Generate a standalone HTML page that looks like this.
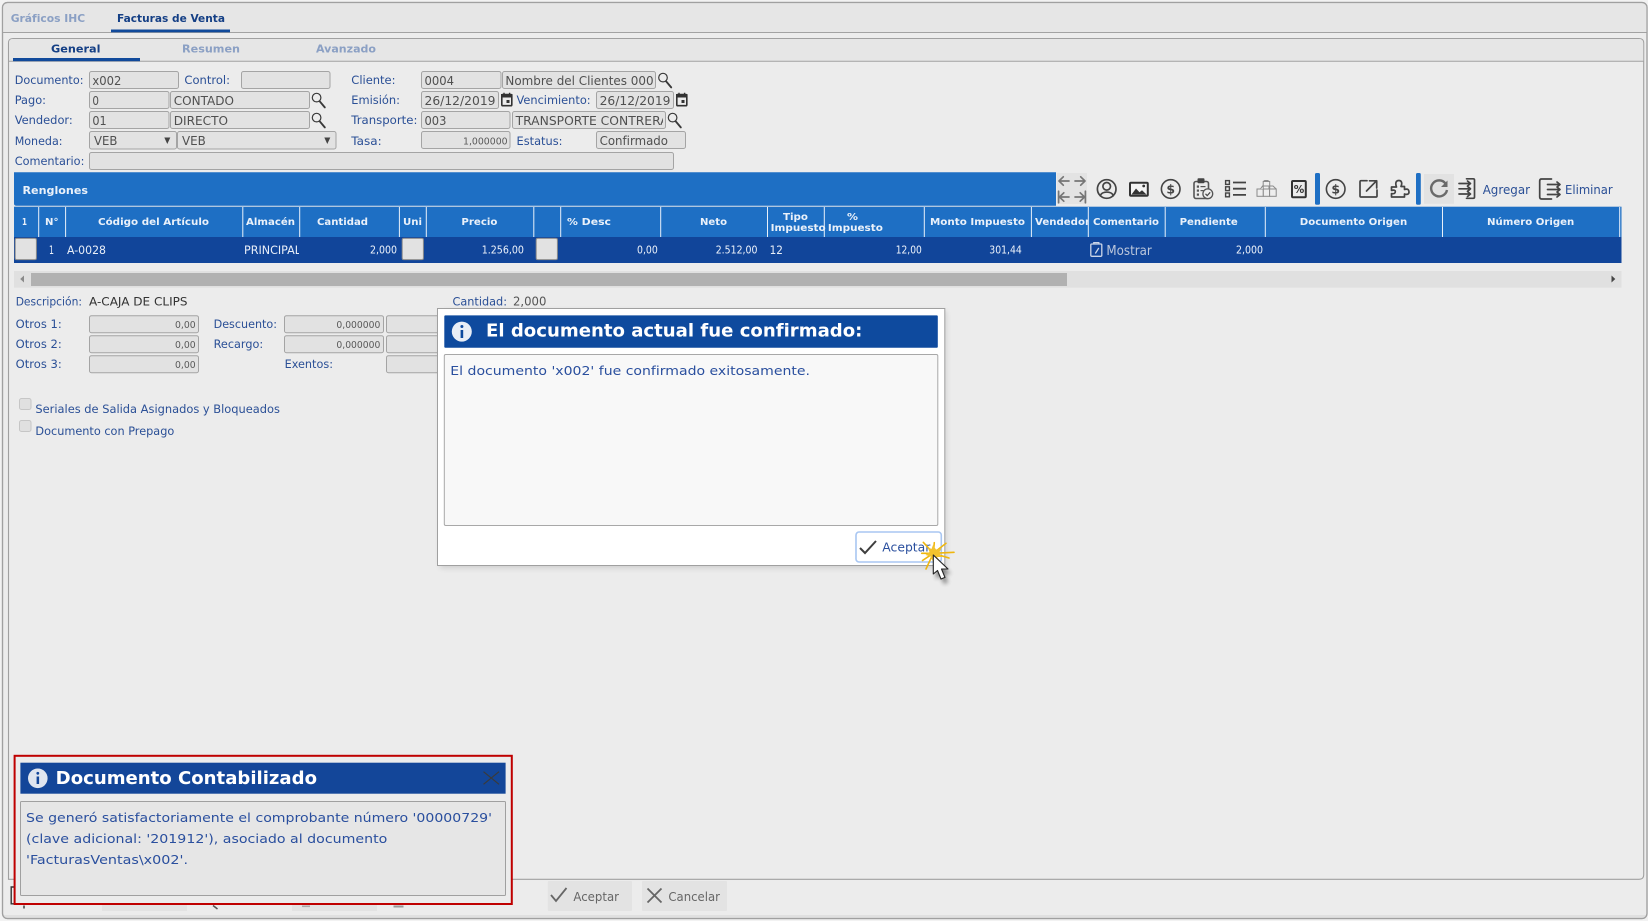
<!DOCTYPE html>
<html lang="es"><head><meta charset="utf-8"><title>Facturas de Venta</title>
<style>
html,body{margin:0;padding:0;width:1648px;height:921px;overflow:hidden;background:#f0f0f0}
svg{display:block;filter:blur(.35px)}
text{font-family:"DejaVu Sans","Liberation Sans",sans-serif;white-space:pre}
.l{font-size:11.5px;fill:#2a4f96}
.v{font-size:12.5px;fill:#505050}
.n{font-size:10px;fill:#5a5a5a}
.h{font-size:10px;font-weight:bold;fill:#eaf1fa}
.r{font-size:11.5px;fill:#e8eef8}
.m{font-size:10.6px;fill:#eef3fb}
.t{font-size:11px;font-weight:bold}
.i{fill:#e2e2e2;stroke:#a4a4a4;stroke-width:1}
.ic{fill:none;stroke:#444;stroke-width:1.7;stroke-linecap:round;stroke-linejoin:round}
.sep{stroke:#e8f0fa;stroke-width:1}
</style></head><body>
<svg width="1648" height="921" viewBox="0 0 1648 921" xmlns="http://www.w3.org/2000/svg">
<defs>
<clipPath id="c1"><rect x="244" y="240" width="55" height="20"/></clipPath>
<clipPath id="c2"><rect x="515" y="111" width="148" height="18"/></clipPath>
<clipPath id="c3"><rect x="1030" y="207" width="58" height="30"/></clipPath>
<filter id="sh" x="-20%" y="-20%" width="140%" height="140%"><feGaussianBlur stdDeviation="3"/></filter>
<filter id="sh2" x="-50%" y="-50%" width="200%" height="200%"><feGaussianBlur stdDeviation="2"/></filter>
</defs>
<rect width="1648" height="921" fill="#f2f2f2"/>
<!-- outer -->
<rect x="2.5" y="2.5" width="1644.5" height="916" rx="5" fill="#ececec" stroke="#a0a0a0" stroke-width="1.2"/>
<path d="M3 32.3V8Q3 3 8 3H1642Q1646.5 3 1646.5 8V32.3Z" fill="#e6e6e6"/>
<path d="M3 32.5H1647" stroke="#a2a2a2" stroke-width="1.1"/>
<rect x="3.2" y="915" width="1643" height="3.2" fill="#e0e0e0"/>
<rect x="2.5" y="2.5" width="1644.5" height="916" rx="5" fill="none" stroke="#a0a0a0" stroke-width="1.2"/>
<text x="10.7" y="22" class="t" fill="#8ba0c4" textLength="74.5" lengthAdjust="spacingAndGlyphs">Gráficos IHC</text>
<text x="117" y="22" class="t" fill="#143f85" textLength="108" lengthAdjust="spacingAndGlyphs">Facturas de Venta</text>
<rect x="111" y="29.5" width="119" height="2.8" fill="#114a9b"/>
<!-- inner -->
<path d="M8.5 879.3V43Q8.5 38.5 13 38.5H1639Q1643.7 38.5 1643.7 43V875Q1643.7 879.3 1639 879.3Z" fill="#ececec" stroke="#a0a0a0" stroke-width="1.1"/>
<path d="M9 42.5Q9 39 13 39H1639Q1643.2 39 1643.2 43V61H9Z" fill="#e6e6e6"/>
<path d="M8.5 61.2H1643.7" stroke="#a2a2a2" stroke-width="1"/>
<text x="51" y="52.6" class="t" fill="#143f85" textLength="49.5" lengthAdjust="spacingAndGlyphs">General</text>
<text x="182" y="52.6" class="t" fill="#8ba0c4" textLength="58" lengthAdjust="spacingAndGlyphs">Resumen</text>
<text x="316" y="52.6" class="t" fill="#8ba0c4" textLength="60" lengthAdjust="spacingAndGlyphs">Avanzado</text>
<rect x="13" y="58" width="127" height="3.2" fill="#114a9b"/>
<!-- form inputs -->
<g>
<rect class="i" x="89.5" y="71.5" width="89" height="17" rx="2"/>
<rect class="i" x="241.5" y="71.5" width="88.5" height="17" rx="2"/>
<rect class="i" x="421.5" y="71.5" width="79.5" height="17" rx="2"/>
<rect class="i" x="502.5" y="71.5" width="153" height="17" rx="2"/>
<rect class="i" x="89.5" y="91.5" width="79.5" height="17" rx="2"/>
<rect class="i" x="170.5" y="91.5" width="139" height="17" rx="2"/>
<rect class="i" x="421.5" y="91.5" width="77" height="17" rx="2"/>
<rect class="i" x="596.5" y="91.5" width="77" height="17" rx="2"/>
<rect class="i" x="89.5" y="111.5" width="79.5" height="17" rx="2"/>
<rect class="i" x="170.5" y="111.5" width="139" height="17" rx="2"/>
<rect class="i" x="421.5" y="111.5" width="88.5" height="17" rx="2"/>
<rect class="i" x="512.5" y="111.5" width="153" height="17" rx="2"/>
<rect class="i" x="89.5" y="131.5" width="87" height="17.5" rx="2"/>
<rect class="i" x="177.5" y="131.5" width="158.5" height="17.5" rx="2"/>
<rect class="i" x="421.5" y="131.5" width="88.5" height="17" rx="2"/>
<rect class="i" x="596.5" y="131.5" width="89" height="17" rx="2"/>
<rect class="i" x="89.5" y="152.5" width="584" height="17" rx="2"/>
</g>
<!-- labels -->
<text class="l" x="14.7" y="84.2" textLength="68.8" lengthAdjust="spacingAndGlyphs">Documento:</text>
<text class="l" x="184.4" y="84.2" textLength="45.6" lengthAdjust="spacingAndGlyphs">Control:</text>
<text class="l" x="351.3" y="84.2" textLength="44.2" lengthAdjust="spacingAndGlyphs">Cliente:</text>
<text class="l" x="14.7" y="104.2" textLength="31.3" lengthAdjust="spacingAndGlyphs">Pago:</text>
<text class="l" x="351.3" y="104.2" textLength="48.7" lengthAdjust="spacingAndGlyphs">Emisión:</text>
<text class="l" x="516.5" y="104.2" textLength="74.1" lengthAdjust="spacingAndGlyphs">Vencimiento:</text>
<text class="l" x="14.7" y="124.2" textLength="58.1" lengthAdjust="spacingAndGlyphs">Vendedor:</text>
<text class="l" x="351.3" y="124.2" textLength="66.1" lengthAdjust="spacingAndGlyphs">Transporte:</text>
<text class="l" x="14.7" y="145" textLength="47.8" lengthAdjust="spacingAndGlyphs">Moneda:</text>
<text class="l" x="351.3" y="145" textLength="30.4" lengthAdjust="spacingAndGlyphs">Tasa:</text>
<text class="l" x="516.5" y="145" textLength="46" lengthAdjust="spacingAndGlyphs">Estatus:</text>
<text class="l" x="14.7" y="165" textLength="69.7" lengthAdjust="spacingAndGlyphs">Comentario:</text>
<!-- values -->
<text class="v" x="92.4" y="85" textLength="29" lengthAdjust="spacingAndGlyphs">x002</text>
<text class="v" x="424.5" y="85" textLength="29.5" lengthAdjust="spacingAndGlyphs">0004</text>
<text class="v" x="505.4" y="85" textLength="148.2" lengthAdjust="spacingAndGlyphs">Nombre del Clientes 000</text>
<text class="v" x="92.4" y="105" textLength="6.6" lengthAdjust="spacingAndGlyphs">0</text>
<text class="v" x="173.7" y="105" textLength="60.3" lengthAdjust="spacingAndGlyphs">CONTADO</text>
<text class="v" x="424.5" y="105" textLength="71" lengthAdjust="spacingAndGlyphs">26/12/2019</text>
<text class="v" x="599.6" y="105" textLength="70.9" lengthAdjust="spacingAndGlyphs">26/12/2019</text>
<text class="v" x="92.4" y="125" textLength="14.3" lengthAdjust="spacingAndGlyphs">01</text>
<text class="v" x="173.7" y="125" textLength="54.3" lengthAdjust="spacingAndGlyphs">DIRECTO</text>
<text class="v" x="424.5" y="125" textLength="21.9" lengthAdjust="spacingAndGlyphs">003</text>
<text class="v" clip-path="url(#c2)" x="515.6" y="125" textLength="153" lengthAdjust="spacingAndGlyphs">TRANSPORTE CONTRERA</text>
<text class="v" x="94" y="145" textLength="23.4" lengthAdjust="spacingAndGlyphs">VEB</text>
<text class="v" x="182" y="145" textLength="23.8" lengthAdjust="spacingAndGlyphs">VEB</text>
<path d="M164.3 137.5h6l-3 6.5zM324.3 137.5h6l-3 6.5z" fill="#444"/>
<text class="n" x="463" y="144.5" textLength="44.6" lengthAdjust="spacingAndGlyphs">1,000000</text>
<text class="v" x="599.6" y="145" textLength="68.4" lengthAdjust="spacingAndGlyphs">Confirmado</text>
<!-- search icons -->
<g fill="none" stroke="#3a3a3a" stroke-width="1.2" stroke-linecap="round">
<g><circle cx="663" cy="77.6" r="4.3"/><path d="M666 81.2l5.2 6.2" stroke-width="1.9"/></g>
<g><circle cx="316.6" cy="97.6" r="4.3"/><path d="M319.6 101.2l5.2 6.2" stroke-width="1.9"/></g>
<g><circle cx="316.6" cy="117.6" r="4.3"/><path d="M319.6 121.2l5.2 6.2" stroke-width="1.9"/></g>
<g><circle cx="672.6" cy="117.6" r="4.3"/><path d="M675.6 121.2l5.2 6.2" stroke-width="1.9"/></g>
</g>
<!-- calendars -->
<g>
<rect x="501.8" y="94.5" width="10" height="11.2" rx="1" fill="none" stroke="#333" stroke-width="1.6"/><rect x="501" y="94" width="11.5" height="3.5" fill="#333"/><path d="M504 92.8v2M509.6 92.8v2" stroke="#333" stroke-width="1.4"/><rect x="506.5" y="100" width="3" height="3" fill="#333"/>
<rect x="676.8" y="94.5" width="10" height="11.2" rx="1" fill="none" stroke="#333" stroke-width="1.6"/><rect x="676" y="94" width="11.5" height="3.5" fill="#333"/><path d="M679 92.8v2M684.6 92.8v2" stroke="#333" stroke-width="1.4"/><rect x="681.5" y="100" width="3" height="3" fill="#333"/>
</g>
<!-- Renglones bar -->
<path d="M14 172.3H1056V205.7H16Q14 205.7 14 203.5Z" fill="#1e6fc4"/>
<text x="22.5" y="194.2" class="t" fill="#eaf1fa" textLength="65.5" lengthAdjust="spacingAndGlyphs">Renglones</text>
<!-- header -->
<rect x="14" y="206.7" width="1607.5" height="30.5" fill="#1e6fc4"/>
<path class="sep" d="M38.7 207V237M65.6 207V237M242.8 207V237M299.7 207V237M399.4 207V237M426.3 207V237M533.8 207V237M560.7 207V237M660.7 207V237M767.5 207V237M824.3 207V237M924.3 207V237M1031.4 207V237M1088.3 207V237M1165.2 207V237M1265.3 207V237M1442.5 207V237M1619.7 207V237"/>
<g>
<text class="h" x="22" y="225" textLength="5" lengthAdjust="spacingAndGlyphs">1</text>
<text class="h" x="45" y="225" textLength="13.5" lengthAdjust="spacingAndGlyphs">N°</text>
<text class="h" x="98" y="225" textLength="111" lengthAdjust="spacingAndGlyphs">Código del Artículo</text>
<text class="h" x="246" y="225" textLength="49" lengthAdjust="spacingAndGlyphs">Almacén</text>
<text class="h" x="317" y="225" textLength="51" lengthAdjust="spacingAndGlyphs">Cantidad</text>
<text class="h" x="403" y="225" textLength="19" lengthAdjust="spacingAndGlyphs">Uni</text>
<text class="h" x="461.4" y="225" textLength="36" lengthAdjust="spacingAndGlyphs">Precio</text>
<text class="h" x="567" y="225" textLength="44" lengthAdjust="spacingAndGlyphs">% Desc</text>
<text class="h" x="700" y="225" textLength="27" lengthAdjust="spacingAndGlyphs">Neto</text>
<text class="h" x="783" y="220" textLength="25" lengthAdjust="spacingAndGlyphs">Tipo</text>
<text class="h" x="770.7" y="231" textLength="55" lengthAdjust="spacingAndGlyphs">Impuesto</text>
<text class="h" x="847" y="220" textLength="11" lengthAdjust="spacingAndGlyphs">%</text>
<text class="h" x="827.9" y="231" textLength="55" lengthAdjust="spacingAndGlyphs">Impuesto</text>
<text class="h" x="930" y="225" textLength="95" lengthAdjust="spacingAndGlyphs">Monto Impuesto</text>
<text class="h" clip-path="url(#c3)" x="1035" y="225" textLength="55" lengthAdjust="spacingAndGlyphs">Vendedor</text>
<text class="h" x="1093" y="225" textLength="66" lengthAdjust="spacingAndGlyphs">Comentario</text>
<text class="h" x="1179.6" y="225" textLength="58.2" lengthAdjust="spacingAndGlyphs">Pendiente</text>
<text class="h" x="1299.8" y="225" textLength="107.4" lengthAdjust="spacingAndGlyphs">Documento Origen</text>
<text class="h" x="1487" y="225" textLength="87.3" lengthAdjust="spacingAndGlyphs">Número Origen</text>
</g>
<!-- row -->
<rect x="14" y="237" width="1607.5" height="26" fill="#11459a"/>
<rect x="15.2" y="238.4" width="21.2" height="21.2" rx="1.5" fill="#e2e2e2" stroke="#8d8d8d"/>
<rect x="402.2" y="238.4" width="21.2" height="21.2" rx="1.5" fill="#e2e2e2" stroke="#8d8d8d"/>
<rect x="536.2" y="238.4" width="21.2" height="21.2" rx="1.5" fill="#e2e2e2" stroke="#8d8d8d"/>
<text class="r" x="49" y="254" textLength="5" lengthAdjust="spacingAndGlyphs">1</text>
<text class="r" x="67" y="254" textLength="39" lengthAdjust="spacingAndGlyphs">A-0028</text>
<text class="r" clip-path="url(#c1)" x="244" y="254" textLength="57" lengthAdjust="spacingAndGlyphs">PRINCIPAL</text>
<text class="m" x="370" y="253.6" textLength="27" lengthAdjust="spacingAndGlyphs">2,000</text>
<text class="m" x="481.7" y="253.6" textLength="42.3" lengthAdjust="spacingAndGlyphs">1.256,00</text>
<text class="m" x="637" y="253.6" textLength="20.8" lengthAdjust="spacingAndGlyphs">0,00</text>
<text class="m" x="715.7" y="253.6" textLength="41.8" lengthAdjust="spacingAndGlyphs">2.512,00</text>
<text class="r" x="769.6" y="254" textLength="13.3" lengthAdjust="spacingAndGlyphs">12</text>
<text class="m" x="895.7" y="253.6" textLength="26.1" lengthAdjust="spacingAndGlyphs">12,00</text>
<text class="m" x="989.3" y="253.6" textLength="32.5" lengthAdjust="spacingAndGlyphs">301,44</text>
<text class="m" x="1236" y="253.6" textLength="27" lengthAdjust="spacingAndGlyphs">2,000</text>
<g fill="none" stroke="#ccd6e8" stroke-width="1.3"><rect x="1090.8" y="244" width="11" height="12.3" rx="1"/><path d="M1093.8 244v-1.4h5v1.4M1098.8 248l-3.5 5.5" /></g>
<text x="1106.4" y="255" font-size="13.6" fill="#bcc7dc" textLength="45.4" lengthAdjust="spacingAndGlyphs">Mostrar</text>
<!-- scrollbar -->
<rect x="14" y="271" width="1607.5" height="16.7" fill="#e0e0e0"/>
<rect x="31" y="273" width="1036" height="13" fill="#b1b1b1"/>
<path d="M24 275.5v7l-3.8-3.5z" fill="#8a8a8a"/><path d="M1611.5 275.5v7l3.8-3.5z" fill="#444"/>
<!-- toolbar -->
<rect x="1057" y="173" width="30" height="31" fill="#e3e3e3"/>
<g fill="none" stroke="#767676" stroke-width="1.7" stroke-linecap="round" stroke-linejoin="round">
<path d="M1059 181H1069M1063.3 176.8l-4.3 4.2 4.3 4.2"/><path d="M1075 181H1085M1080.7 176.8l4.3 4.2-4.3 4.2"/>
<path d="M1058.6 191.2v11.6M1059.5 197H1069M1063.8 192.8l-4.3 4.2 4.3 4.2"/><path d="M1085.4 191.2v11.6M1075 197H1084.5M1080.2 192.8l4.3 4.2-4.3 4.2"/>
</g>
<!-- user -->
<g class="ic" stroke="#3c3c3c"><circle cx="1106.7" cy="189" r="9.3"/><circle cx="1106.7" cy="186.3" r="3.8"/><path d="M1100.3 195.8c1.5-5 11.5-5 13 0"/></g>
<!-- image -->
<rect x="1130" y="182.7" width="17.8" height="13" rx="1" fill="#f4f4f4" stroke="#333" stroke-width="2"/>
<path d="M1131.5 194.5L1136 188.5 1139.5 192.3 1142 190.2 1146.5 194.5Z" fill="#333"/><circle cx="1143.7" cy="186" r="1.4" fill="#333"/>
<!-- dollar -->
<circle cx="1170.7" cy="189" r="9.3" fill="none" stroke="#444" stroke-width="1.6"/>
<text x="1170.7" y="193.5" font-size="12.5" font-weight="bold" fill="#444" text-anchor="middle">$</text>
<!-- clipboard-check -->
<g fill="none" stroke="#555" stroke-width="1.6" stroke-linejoin="round"><rect x="1194" y="181.5" width="14.5" height="17" rx="2"/></g>
<rect x="1197.5" y="178.3" width="7" height="5" rx="1" fill="#444"/>
<g fill="#555"><rect x="1196.8" y="185.5" width="2.2" height="2.2"/><rect x="1196.8" y="189.5" width="2.2" height="2.2"/><rect x="1196.8" y="193.5" width="2.2" height="2.2"/><rect x="1200.5" y="186" width="5" height="1.2"/><rect x="1200.5" y="190" width="3" height="1.2"/></g>
<circle cx="1207.8" cy="193.8" r="4.9" fill="#ececec" stroke="#555" stroke-width="1.3"/><path d="M1205.5 193.8l1.7 1.8 3-3.3" fill="none" stroke="#444" stroke-width="1.2"/>
<!-- list -->
<g fill="none" stroke="#444" stroke-width="1.4"><rect x="1225.6" y="180.6" width="3.8" height="3.8"/><rect x="1225.6" y="186.8" width="3.8" height="3.8"/><rect x="1225.6" y="193" width="3.8" height="3.8"/></g>
<path d="M1233 182.5H1246M1233 188.7H1246M1233 194.9H1246" stroke="#444" stroke-width="1.8"/>
<!-- boxes -->
<g fill="#eee" stroke="#8a8a8a" stroke-width="1"><rect x="1257" y="189" width="6.3" height="7.3"/><rect x="1263.3" y="189" width="6.3" height="7.3"/><rect x="1269.6" y="189" width="6.6" height="7.3"/><path d="M1260.5 189l2-3h6.5v3M1263.2 181.5h6.5v7.5h-6.5zM1263.2 181.5l1.5-1h3l1.8 1M1269.7 186h3.3l3.2 3"/></g>
<!-- percent doc -->
<rect x="1292" y="181" width="13.8" height="16.3" rx="1" fill="#ececec" stroke="#333" stroke-width="2"/>
<text x="1299" y="193" font-size="10.5" font-weight="bold" fill="#333" text-anchor="middle">%</text>
<rect x="1315" y="173" width="5" height="31.7" rx="1.5" fill="#1e6fc4"/>
<circle cx="1335.7" cy="189" r="9.3" fill="none" stroke="#444" stroke-width="1.6"/>
<text x="1335.7" y="193.5" font-size="12.5" font-weight="bold" fill="#444" text-anchor="middle">$</text>
<!-- external -->
<path class="ic" stroke="#555" d="M1367 180.7H1361Q1360 180.7 1360 182V196Q1360 197 1361 197H1376Q1377 197 1377 196V190M1366.5 191L1376.5 180.8M1369.5 180.8H1376.7V188"/>
<!-- puzzle -->
<path class="ic" stroke="#444" stroke-width="1.5" d="M1391.5 187H1396.5C1395 183 1396 180.5 1398.8 180.5S1402.5 183 1401 186.5H1404.5V189.5C1408 188.3 1409 190 1409 192S1407.5 195 1404.5 194V197H1391.5V193.6C1394.5 194 1395.3 193 1395.3 191.6S1394.3 189.8 1391.5 190.4Z"/>
<rect x="1416" y="173" width="4.8" height="31.7" rx="1.5" fill="#1e6fc4"/>
<!-- refresh -->
<rect x="1424" y="174" width="30" height="29.7" fill="#e2e2e2"/>
<path d="M1445.5 183.5A8 8 0 1 0 1447 190" fill="none" stroke="#6a6a6a" stroke-width="2.4"/>
<path d="M1447.5 180.5v6.5h-6.5z" fill="#6a6a6a"/>
<!-- agregar -->
<path class="ic" stroke="#3c3c3c" d="M1466.5 178.8H1473.2Q1474.5 178.8 1474.5 180V197Q1474.5 198.3 1473.2 198.3H1466.5"/>
<path class="ic" stroke="#3c3c3c" stroke-width="1.5" d="M1459 183.5H1470.5M1467.5 181l3 2.5-3 2.5M1459 188.8H1470.5M1467.5 186.3l3 2.5-3 2.5M1459 194H1470.5M1467.5 191.5l3 2.5-3 2.5"/>
<text x="1482.7" y="194" font-size="12" fill="#2a4f96" textLength="47.3" lengthAdjust="spacingAndGlyphs">Agregar</text>
<!-- eliminar -->
<path class="ic" stroke="#3c3c3c" d="M1551.5 179H1541.5Q1539.7 179 1539.7 181V197Q1539.7 199 1541.5 199H1551.5"/>
<path class="ic" stroke="#3c3c3c" stroke-width="1.5" d="M1547.5 184.5H1560M1557 182l3 2.5-3 2.5M1547.5 189.5H1560M1557 187l3 2.5-3 2.5M1547.5 194.5H1560M1557 192l3 2.5-3 2.5"/>
<text x="1565" y="194" font-size="12" fill="#2a4f96" textLength="47.7" lengthAdjust="spacingAndGlyphs">Eliminar</text>
<!-- details -->
<text class="l" x="15.7" y="305.4" textLength="66.3" lengthAdjust="spacingAndGlyphs">Descripción:</text>
<text x="89" y="305.4" font-size="11.5" fill="#333" textLength="98.5" lengthAdjust="spacingAndGlyphs">A-CAJA DE CLIPS</text>
<text class="l" x="452.5" y="305.7" textLength="54.5" lengthAdjust="spacingAndGlyphs">Cantidad:</text>
<text x="513" y="305.7" font-size="12" fill="#555" textLength="33.4" lengthAdjust="spacingAndGlyphs">2,000</text>
<text class="l" x="15.7" y="328" textLength="46.1" lengthAdjust="spacingAndGlyphs">Otros 1:</text>
<text class="l" x="15.7" y="348" textLength="46.1" lengthAdjust="spacingAndGlyphs">Otros 2:</text>
<text class="l" x="15.7" y="368" textLength="46.1" lengthAdjust="spacingAndGlyphs">Otros 3:</text>
<text class="l" x="213.6" y="328" textLength="63.4" lengthAdjust="spacingAndGlyphs">Descuento:</text>
<text class="l" x="213.6" y="348" textLength="49.6" lengthAdjust="spacingAndGlyphs">Recargo:</text>
<text class="l" x="284.6" y="368" textLength="48.4" lengthAdjust="spacingAndGlyphs">Exentos:</text>
<rect class="i" x="89.5" y="315.7" width="109" height="17" rx="2"/>
<rect class="i" x="89.5" y="335.7" width="109" height="17" rx="2"/>
<rect class="i" x="89.5" y="355.7" width="109" height="17" rx="2"/>
<rect class="i" x="284.5" y="315.7" width="99" height="17" rx="2"/>
<rect class="i" x="284.5" y="335.7" width="99" height="17" rx="2"/>
<rect class="i" x="386.5" y="315.7" width="70" height="17" rx="2"/>
<rect class="i" x="386.5" y="335.7" width="70" height="17" rx="2"/>
<rect class="i" x="386.5" y="355.7" width="70" height="17" rx="2"/>
<text class="n" x="175" y="328" textLength="20.7" lengthAdjust="spacingAndGlyphs">0,00</text>
<text class="n" x="175" y="348" textLength="20.7" lengthAdjust="spacingAndGlyphs">0,00</text>
<text class="n" x="175" y="368" textLength="20.7" lengthAdjust="spacingAndGlyphs">0,00</text>
<text class="n" x="336.4" y="328" textLength="44" lengthAdjust="spacingAndGlyphs">0,000000</text>
<text class="n" x="336.4" y="348" textLength="44" lengthAdjust="spacingAndGlyphs">0,000000</text>
<rect x="19.5" y="398.5" width="11.5" height="11" rx="2" fill="#e0e0e0" stroke="#c6c6c6"/>
<rect x="19.5" y="420.5" width="11.5" height="11" rx="2" fill="#e0e0e0" stroke="#c6c6c6"/>
<text class="l" x="35.4" y="413" textLength="244.6" lengthAdjust="spacingAndGlyphs">Seriales de Salida Asignados y Bloqueados</text>
<text class="l" x="35.4" y="435" textLength="138.9" lengthAdjust="spacingAndGlyphs">Documento con Prepago</text>
<!-- dialog -->
<rect x="440" y="311" width="506" height="257" fill="#000" opacity=".13" filter="url(#sh)"/>
<rect x="437.5" y="308.5" width="507.3" height="257" fill="#fff" stroke="#a0a0a0" stroke-width="1"/>
<rect x="444.3" y="315.4" width="493.5" height="32.3" rx="1" fill="#0e4a9e"/>
<circle cx="461.8" cy="331.6" r="10" fill="#e9eef6"/><rect x="460.6" y="330" width="2.6" height="8" fill="#0e4a9e"/><circle cx="461.9" cy="326.5" r="1.5" fill="#0e4a9e"/>
<text x="486" y="336.6" font-size="18" font-weight="bold" fill="#fff" textLength="376.4" lengthAdjust="spacingAndGlyphs">El documento actual fue confirmado:</text>
<rect x="444.3" y="354.5" width="493.5" height="171" rx="1.5" fill="#f8f8f8" stroke="#a8a8a8"/>
<text x="450.3" y="374.8" font-size="12" fill="#2a4f9e" textLength="359.7" lengthAdjust="spacingAndGlyphs">El documento 'x002' fue confirmado exitosamente.</text>
<rect x="856" y="532" width="85.3" height="30" rx="3" fill="#fff" stroke="#a8c6f2" stroke-width="1.6"/>
<path d="M860 548l5 5 11-12" fill="none" stroke="#3e3e3e" stroke-width="2"/>
<text x="882.3" y="551.4" font-size="12" fill="#2a4f9e" textLength="48" lengthAdjust="spacingAndGlyphs">Aceptar</text>
<!-- spark & cursor -->
<g stroke="#efb60e" stroke-width="1.6" stroke-linecap="round">
<path d="M933.3 553.3L954 552.3M933.3 553.3L946 543.3M933.3 553.3L934.3 542.7M933.3 553.3L923.3 542.3M933.3 553.3L921.7 553.3M933.3 553.3L926 569M933.3 553.3L922.5 560.5M933.3 553.3L940 562.7M933.3 553.3L949 558"/></g>
<polygon points="933,545 936,549.5 941.5,548.5 939,553 942,557 936.5,557 933,561.5 930.5,556.5 925.5,555 929.5,552 927.5,547 931.5,549" fill="#f3c22c"/>
<path d="M936 560v19l4.5-3.5 3.5 8.5 4-1.7-3.5-8.3 6.5-.2z" fill="#000" opacity=".45" filter="url(#sh2)"/>
<path d="M933.3 555v19l4.2-3.5 3.5 8.5 4-1.6-3.5-8.4h6.5z" fill="#fff" stroke="#222" stroke-width="1.1" stroke-linejoin="round"/>
<!-- footer -->
<rect x="547.8" y="881" width="84.2" height="30" rx="1" fill="#e3e3e3"/>
<rect x="642" y="881" width="85" height="30" rx="1" fill="#e3e3e3"/>
<path d="M551 895l5 6 10.5-13" fill="none" stroke="#666" stroke-width="1.8"/>
<text x="573.4" y="901" font-size="12" fill="#666" textLength="45.6" lengthAdjust="spacingAndGlyphs">Aceptar</text>
<path d="M647.5 888.5l14 14M661.5 888.5l-14 14" fill="none" stroke="#666" stroke-width="1.8"/>
<text x="668.4" y="901" font-size="12" fill="#666" textLength="51.6" lengthAdjust="spacingAndGlyphs">Cancelar</text>
<!-- bits below notification -->
<path d="M14 887H11.2V903.8H14M24 905.5V908.5" fill="none" stroke="#333" stroke-width="1.4"/>
<rect x="102" y="905" width="85" height="6" fill="#e3e3e3"/>
<rect x="292" y="905" width="85" height="6" fill="#e3e3e3"/>
<path d="M213 905.5l4.5 3.5" stroke="#555" stroke-width="1.5"/>
<rect x="302" y="905.5" width="8" height="1.6" fill="#aaa"/><rect x="393.5" y="905.5" width="10" height="2" fill="#999"/>
<!-- notification -->
<rect x="14.6" y="755.8" width="497.2" height="148.2" fill="#ececec" stroke="#bf0000" stroke-width="2"/>
<rect x="20.4" y="762.7" width="485.2" height="31" fill="#134699"/>
<circle cx="37.8" cy="778.3" r="9.8" fill="#dfe5ef"/><rect x="36.6" y="776.5" width="2.5" height="7.5" fill="#134699"/><circle cx="37.8" cy="773.3" r="1.4" fill="#134699"/>
<text x="55.7" y="784" font-size="18" font-weight="bold" fill="#fff" textLength="261.3" lengthAdjust="spacingAndGlyphs">Documento Contabilizado</text>
<path d="M483.5 771.7l15.5 12.6M499 771.7l-15.5 12.6" fill="none" stroke="#3a3a3a" stroke-width="1.2"/>
<rect x="20.5" y="801.5" width="485" height="94" rx="1" fill="#e6e6e6" stroke="#a0a0a0"/>
<g font-size="12" fill="#2a4f9e">
<text x="26" y="822" textLength="466" lengthAdjust="spacingAndGlyphs">Se generó satisfactoriamente el comprobante número '00000729'</text>
<text x="26" y="843" textLength="361.3" lengthAdjust="spacingAndGlyphs">(clave adicional: '201912'), asociado al documento</text>
<text x="26" y="864" textLength="162" lengthAdjust="spacingAndGlyphs">'FacturasVentas\x002'.</text>
</g>
</svg>
</body></html>
